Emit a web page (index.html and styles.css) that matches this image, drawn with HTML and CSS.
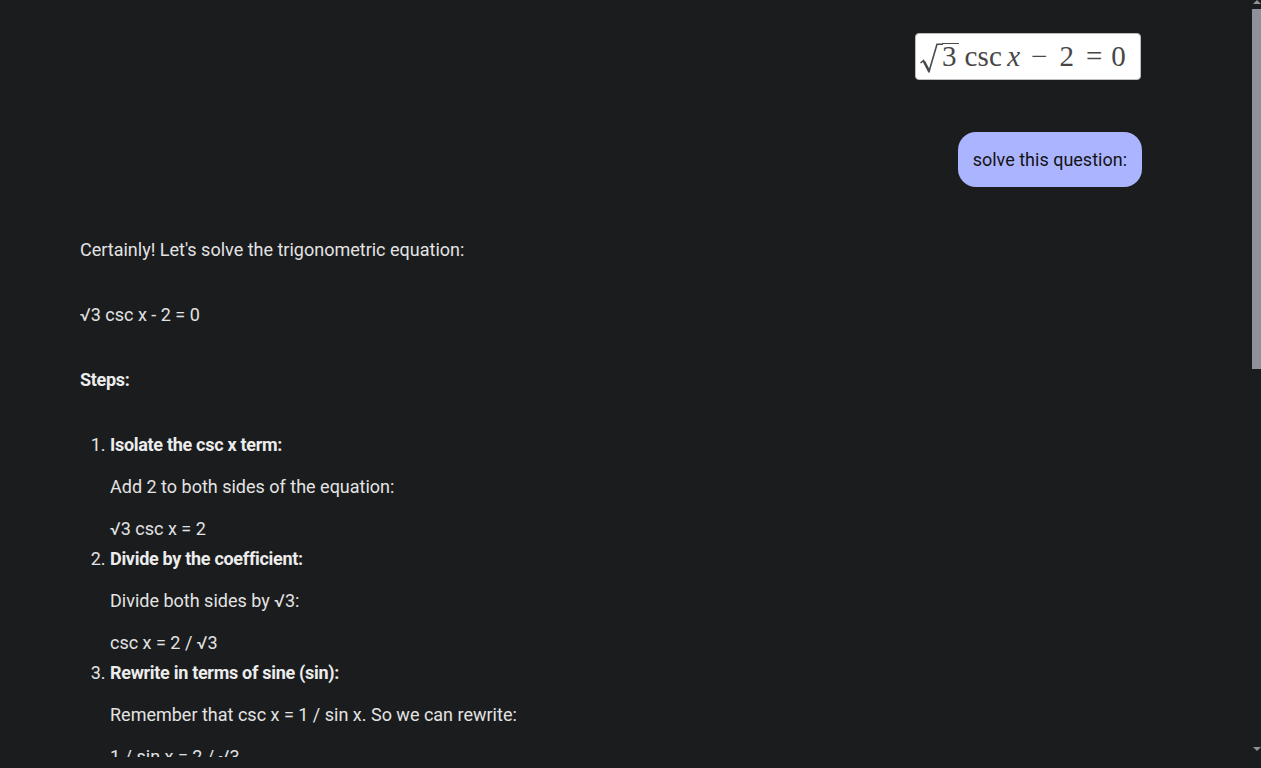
FILE: index.html
```html
<!DOCTYPE html>
<html lang="en">
<head>
<meta charset="utf-8">
<title>Chat</title>
<link rel="stylesheet" href="styles.css">
</head>
<body>
<main class="chat">
  <section class="user-turn">
    <div class="attachment">
      <div class="math">
        <svg class="radical" width="23" height="30" viewBox="0 0 23 30" aria-hidden="true">
          <polyline points="0.5,20 3.5,17.5 9,28.5 17,1.2 23,1.2" fill="none" stroke="#4a4a4a" stroke-width="1.6" stroke-linejoin="miter"/>
          <line x1="4" y1="18.5" x2="9.3" y2="28.5" stroke="#4a4a4a" stroke-width="2.6"/>
        </svg>
        <span class="radicand">3</span>
        <span class="fn">csc</span>
        <i class="var">x</i>
        <span class="op minus">−</span>
        <span class="num">2</span>
        <span class="op eq">=</span>
        <span class="num">0</span>
      </div>
    </div>
    <div class="bubble">solve this question:</div>
  </section>

  <section class="response">
    <p>Certainly! Let's solve the trigonometric equation:</p>
    <p>√3 csc x - 2 = 0</p>
    <p><strong>Steps:</strong></p>
    <ol class="steps">
      <li>
        <strong>Isolate the csc x term:</strong>
        <p>Add 2 to both sides of the equation:</p>
        <p>√3 csc x = 2</p>
      </li>
      <li>
        <strong>Divide by the coefficient:</strong>
        <p>Divide both sides by √3:</p>
        <p>csc x = 2 / √3</p>
      </li>
      <li>
        <strong>Rewrite in terms of sine (sin):</strong>
        <p>Remember that csc x = 1 / sin x. So we can rewrite:</p>
        <p>1 / sin x = 2 / √3</p>
      </li>
    </ol>
  </section>
</main>
<aside class="scrollbar" aria-hidden="true">
  <div class="arrow up"></div>
  <div class="thumb"></div>
  <div class="track"></div>
  <div class="arrow down"></div>
</aside>
</body>
</html>
```
FILE: styles.css
```css
html {
  background: #1b1c1e;
  overflow: hidden;
}
body {
  margin: 0;
  background: #1b1c1e;
  color: #e3e3e3;
  font-family: Roboto, "Noto Sans", Arial, sans-serif;
  font-size: 18px;
  line-height: 28px;
}
.chat {
  display: flex;
  flex-direction: column;
  box-sizing: border-box;
  height: 757px;
  overflow: hidden;
  padding: 33px 119px 0 80px;
}
.user-turn {
  display: flex;
  flex-direction: column;
  align-items: flex-end;
}
.attachment {
  width: 226px;
  height: 47px;
  box-sizing: border-box;
  background: #ffffff;
  border: 1px solid #bdbdbd;
  border-radius: 4px;
  display: flex;
  align-items: center;
  padding-left: 4px;
  margin-right: 1px;
}
.math {
  display: flex;
  align-items: baseline;
  font-family: "Liberation Serif", "Times New Roman", serif;
  font-size: 29px;
  line-height: 30px;
  color: #474747;
  white-space: nowrap;
  margin-top: 1px;
}
.radical {
  align-self: center;
  margin-top: 2px;
  flex: none;
}
.radicand {
  border-top: 1.6px solid #4a4a4a;
  margin-left: -1px;
  padding-right: 2px;
  line-height: 24px;
}
.fn {
  margin-left: 6px;
  letter-spacing: 0.2px;
}
.var {
  font-style: italic;
  margin-left: 5px;
}
.minus {
  margin: 0 12px 0 11px;
}
.eq {
  margin: 0 9px 0 12px;
}
.bubble {
  margin-top: 52px;
  background: #abb4ff;
  color: #131314;
  border-radius: 18px;
  padding: 14px 15px 13px 15px;
  line-height: 28px;
}
.response {
  margin-top: 49px;
}
.response p {
  margin: 0 0 37px 0;
}
.response strong {
  font-weight: 700;
  color: #ececec;
  letter-spacing: -0.3px;
}
.steps {
  margin: 0;
  padding-left: 30px;
}
.steps li {
  margin-bottom: 2px;
}
.steps li p {
  margin: 14px 0 0 0;
}
.scrollbar {
  position: fixed;
  top: 0;
  right: 0;
  bottom: 0;
  width: 9px;
  background: #1b1c1e;
  display: flex;
  flex-direction: column;
}
.arrow {
  height: 9px;
  flex: none;
  position: relative;
}
.arrow::after {
  content: "";
  position: absolute;
  left: 1px;
  width: 0;
  height: 0;
  border-left: 4px solid transparent;
  border-right: 4px solid transparent;
}
.arrow.up::after {
  top: 0;
  border-bottom: 4px solid #8e9199;
}
.arrow.down::after {
  bottom: 17px;
  border-top: 4px solid #8e9199;
}
.thumb {
  height: 360px;
  flex: none;
  background: #8e9199;
}
.track {
  flex: 1;
}
```
